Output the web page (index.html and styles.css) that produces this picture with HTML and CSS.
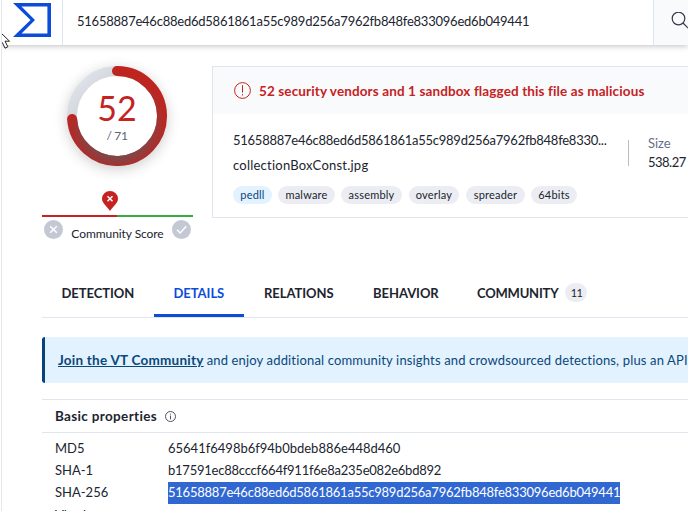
FILE: index.html
```html
<!DOCTYPE html>
<html lang="en">
<head>
<meta charset="utf-8">
<title>File details</title>
<link rel="stylesheet" href="styles.css">
</head>
<body>
<div class="page">
  <header class="topbar">
    <a class="brand"><svg width="38" height="34" viewBox="0 0 38 34"><path d="M0 0H38V34H0L17.5 17ZM8.5 3.6L22 17L8.5 30.4H34.4V3.6Z" fill="#0b4dda" fill-rule="evenodd"/></svg></a>
    <div class="query"><span class="t-query">51658887e46c88ed6d5861861a55c989d256a7962fb848fe833096ed6b049441</span></div>
    <div class="search"><svg width="22" height="22" viewBox="0 0 22 22" fill="none" stroke="#333a45" stroke-width="1.2"><circle cx="7.5" cy="6.5" r="6.3"/><path d="M12 11L20 19"/></svg></div>
  </header>
  <svg class="cursor" width="13" height="20" viewBox="0 0 13 20"><path d="M0 0L10.5 10.2H6L8.8 15.8L6 17.2L3.4 11.7L0 14.5" fill="#fff" stroke="#222" stroke-width="1"/></svg>
  <main>
    <section class="summary">
      <div class="score">
        <div class="gauge">
          <svg width="100" height="100" viewBox="0 0 100 100">
            <defs>
              <radialGradient id="shade" gradientUnits="userSpaceOnUse" cx="50" cy="54" r="51"><stop offset=".7" stop-color="#4f6068" stop-opacity=".7"/><stop offset="1" stop-color="#4f6068" stop-opacity="0"/></radialGradient>
              <linearGradient id="track" x1="0" y1="0" x2="1" y2="1"><stop offset="0" stop-color="#e6e8ef"/><stop offset=".35" stop-color="#cfd1d9"/></linearGradient>
              <linearGradient id="fade" x1="0" y1="0" x2="0" y2="1"><stop offset="0" stop-color="#000"/><stop offset="1" stop-color="#fff"/></linearGradient>
              <mask id="lower"><rect width="100" height="100" fill="url(#fade)"/></mask>
            </defs>
            <circle cx="50" cy="50" r="45" fill="none" stroke="url(#track)" stroke-width="10"/>
            <path d="M50 5A45 45 0 1 1 5.1 53" fill="none" stroke="#c0241f" stroke-width="10" stroke-linecap="round"/>
            <g mask="url(#lower)"><path d="M50 5A45 45 0 1 1 5.1 53" fill="none" stroke="url(#shade)" stroke-width="10"/></g>
          </svg>
          <div class="count"><b class="t-hits">52</b><span class="t-total">/ 71</span></div>
        </div>
        <div class="community">
          <svg class="pin" width="16" height="20" viewBox="0 0 16 20"><path d="M8 20C5.5 15.7 0 12.2 0 7.7A8 7.7 0 0 1 16 7.7C16 12.2 10.5 15.7 8 20Z" fill="#c6221f"/><path d="M5.5 5.3L10.5 10.3M10.5 5.3L5.5 10.3" stroke="#fff" stroke-width="1.5"/></svg>
          <div class="meter"></div>
          <div class="votes">
            <svg width="19" height="19" viewBox="0 0 19 19" fill="none" stroke="#fff" stroke-width="1.5"><circle cx="9.5" cy="9.5" r="9.5" fill="#c4c8d4" stroke="none"/><path d="M6.2 6.2L12.8 12.8M12.8 6.2L6.2 12.8"/></svg>
            <span class="t-community">Community Score</span>
            <svg width="19" height="19" viewBox="0 0 19 19" fill="none" stroke="#fff" stroke-width="1.5"><circle cx="9.5" cy="9.5" r="9.5" fill="#c4c8d4" stroke="none"/><path d="M5 9.8L8.2 13L14.3 6.2"/></svg>
          </div>
        </div>
      </div>
      <article class="card">
        <div class="alert">
          <svg width="17" height="17" viewBox="0 0 17 17" fill="none" stroke="#c6221f"><circle cx="8.5" cy="8.5" r="7.9"/><path d="M8.5 3.2V10.6M8.5 12.2V13.5"/></svg>
          <span class="t-alert">52 security vendors and 1 sandbox flagged this file as malicious</span>
        </div>
        <div class="file">
          <div class="ident">
            <div class="t-hash">51658887e46c88ed6d5861861a55c989d256a7962fb848fe8330...</div>
            <div class="t-name">collectionBoxConst.jpg</div>
            <div class="tags">
              <span class="tag type w39">pedll</span><span class="tag w57">malware</span><span class="tag w61">assembly</span><span class="tag w50">overlay</span><span class="tag w59">spreader</span><span class="tag w46">64bits</span>
            </div>
          </div>
          <div class="size"><span class="t-label">Size</span><span class="t-size">538.27</span></div>
        </div>
      </article>
    </section>
    <nav class="tabs">
      <a class="tab detection"><span>DETECTION</span></a>
      <a class="tab details"><span>DETAILS</span></a>
      <a class="tab relations"><span>RELATIONS</span></a>
      <a class="tab behavior"><span>BEHAVIOR</span></a>
      <a class="tab comm"><span>COMMUNITY</span><i class="badge">11</i></a>
    </nav>
    <div class="banner"><a class="t-join">Join the VT Community</a><span class="t-banner">and enjoy additional community insights and crowdsourced detections, plus an API</span></div>
    <section class="props">
      <h2><span class="t-head">Basic properties</span><svg width="11" height="11" viewBox="0 0 11 11" fill="none" stroke="#3c424d" stroke-width=".9"><circle cx="5.5" cy="5.5" r="5"/><path d="M5.5 4.6V8.4M5.5 2.6V3.6"/></svg></h2>
      <dl>
        <dt>MD5</dt><dd><span>65641f6498b6f94b0bdeb886e448d460</span></dd>
        <dt>SHA-1</dt><dd><span class="t-sha1">b17591ec88cccf664f911f6e8a235e082e6bd892</span></dd>
        <dt>SHA-256</dt><dd><span class="t-sha2">51658887e46c88ed6d5861861a55c989d256a7962fb848fe833096ed6b049441</span></dd>
        <dt>Vhash</dt><dd></dd>
      </dl>
    </section>
  </main>
</div>
</body>
</html>
```
FILE: styles.css
```css
* { box-sizing: border-box; }
body { margin: 0; height: 511px; overflow: hidden; background: #fff; color: #20242e; font: 13px/20px Lato, sans-serif; font-variant-ligatures: none; }
.page { position: relative; height: 511px; margin-left: 1px; border-left: 1px solid #e4e7ed; overflow: hidden; }
svg { display: block; flex: none; }
span, a, b, i { white-space: nowrap; }
.topbar { display: flex; height: 45px; background: #fff; box-shadow: 0 1px 6px rgba(0,0,0,.25); }
.brand { width: 61px; padding: 3px 0 0 11px; border-right: 1px solid #dfe5ee; }
.query { flex: 1; padding: 11px 0 0 14px; }
.search { width: 35px; padding: 12px 0 0 17px; overflow: hidden; background: #f8fafc; border-left: 1px solid #dfe5ee; }
.t-query, .t-sha1, .t-sha2 { letter-spacing: -.235px; }
.cursor { position: absolute; left: -3px; top: 31px; }
main { padding-left: 40px; }
.summary { display: flex; padding-top: 21px; height: 225px; }
.score { width: 151px; margin-right: 19px; }
.gauge { position: relative; width: 100px; height: 100px; margin-left: 25px; border-radius: 50%; box-shadow: 0 3px 14px rgba(0,0,0,.2); }
.count { position: absolute; inset: 0; display: flex; flex-direction: column; align-items: center; padding-top: 22px; }
.t-hits { font-size: 34px; line-height: 40px; font-weight: 400; color: #c6221f; }
.t-total { line-height: 16px; font-size: 12px; letter-spacing: -.3px; color: #5a6372; }
.pin { margin: 25px 0 0 60px; }
.meter { height: 2px; margin-top: 4px; background: linear-gradient(90deg, #c6221f 50%, #36ab3f 50%); }
.votes { display: flex; justify-content: space-between; align-items: flex-start; padding: 3px 2px 0; }
.t-community { font-size: 12px; padding-top: 4px; letter-spacing: -.07px; }
.card { flex: 1; height: 152px; border: 1px solid #e0e4ec; border-right: 0; overflow: hidden; }
.alert { display: flex; align-items: center; height: 47px; padding: 0 0 0 21px; gap: 8px; background: #f8fafc; color: #c6221f; font-weight: 700; }
.t-alert { font-size: 13.5px; letter-spacing: .12px; }
.file { display: flex; padding: 16px 0 0 20px; }
.ident { flex: none; width: 395px; }
.t-hash, .t-name { height: 26px; white-space: nowrap; }
.t-hash { letter-spacing: -.25px; }
.t-name { margin-top: -1px; letter-spacing: .23px; }
.tags { display: flex; gap: 6px; padding-top: 5px; }
.tag { height: 18px; border-radius: 9px; background: #ebedf3; font-size: 11px; line-height: 17px; letter-spacing: .2px; text-align: center; }
.type { background: #e2f2ff; color: #0b4779; }
.w39 { width: 39px; } .w57 { width: 57px; } .w61 { width: 61px; } .w50 { width: 50px; margin-left: 1px; } .w59 { width: 59px; margin-left: 1px; } .w46 { width: 46px; }
.size { display: flex; flex-direction: column; height: 26px; margin-top: 10px; padding-left: 19px; border-left: 1px solid #b8bcc4; }
.size span { line-height: 19px; }
.t-size { letter-spacing: -.5px; }
.t-label { margin-top: -6px; color: #667085; }
.tabs { display: flex; height: 47px; margin-top: 1px; border-bottom: 1px solid #e3e5ee; }
.tab { display: flex; height: 46px; padding: 12px 0 0 20px; font-weight: 700; letter-spacing: -.05px; }
.detection, .details { padding-left: 19.5px; }
.detection { width: 112px; }
.details { width: 90px; color: #0b4dda; border-bottom: 3px solid #0b4dda; }
.relations { width: 109px; }
.behavior { width: 104px; }
.comm { letter-spacing: -.2px; }
.badge { width: 22px; height: 19px; margin-left: 7px; border-radius: 10px; background: #ebedf3; font: 400 11px/19px Lato, sans-serif; letter-spacing: -.8px; text-align: center; }
.banner { display: flex; align-items: center; height: 46px; margin-top: 19px; padding: 0 0 1px 13px; gap: 3px; border-left: 3px solid #08427a; border-radius: 3px 0 0 3px; background: #e2f2ff; color: #0b4779; overflow: hidden; }
.t-join { font-size: 13.5px; letter-spacing: .24px; font-weight: 700; text-decoration: underline; }
.t-banner { letter-spacing: .155px; }
.props { margin-top: 16px; border-top: 1px solid #e0e4ec; }
h2 { display: flex; align-items: center; gap: 8px; height: 33px; margin: 0; padding: 0 0 0 13px; border-bottom: 1px solid #e0e4ec; font: 700 13.5px/20px Lato, sans-serif; letter-spacing: .34px; }
h2 svg { margin-top: 1px; }
dl { display: grid; grid-template-columns: 113px 1fr; grid-auto-rows: 22px; margin: 0; padding: 5px 0 0 13px; line-height: 20px; }
dt:last-of-type { padding-top: 1px; }
dd { margin: 0; }
.t-sha2 { display: inline-block; height: 22px; background: #3167d1; color: #fff; }
```
